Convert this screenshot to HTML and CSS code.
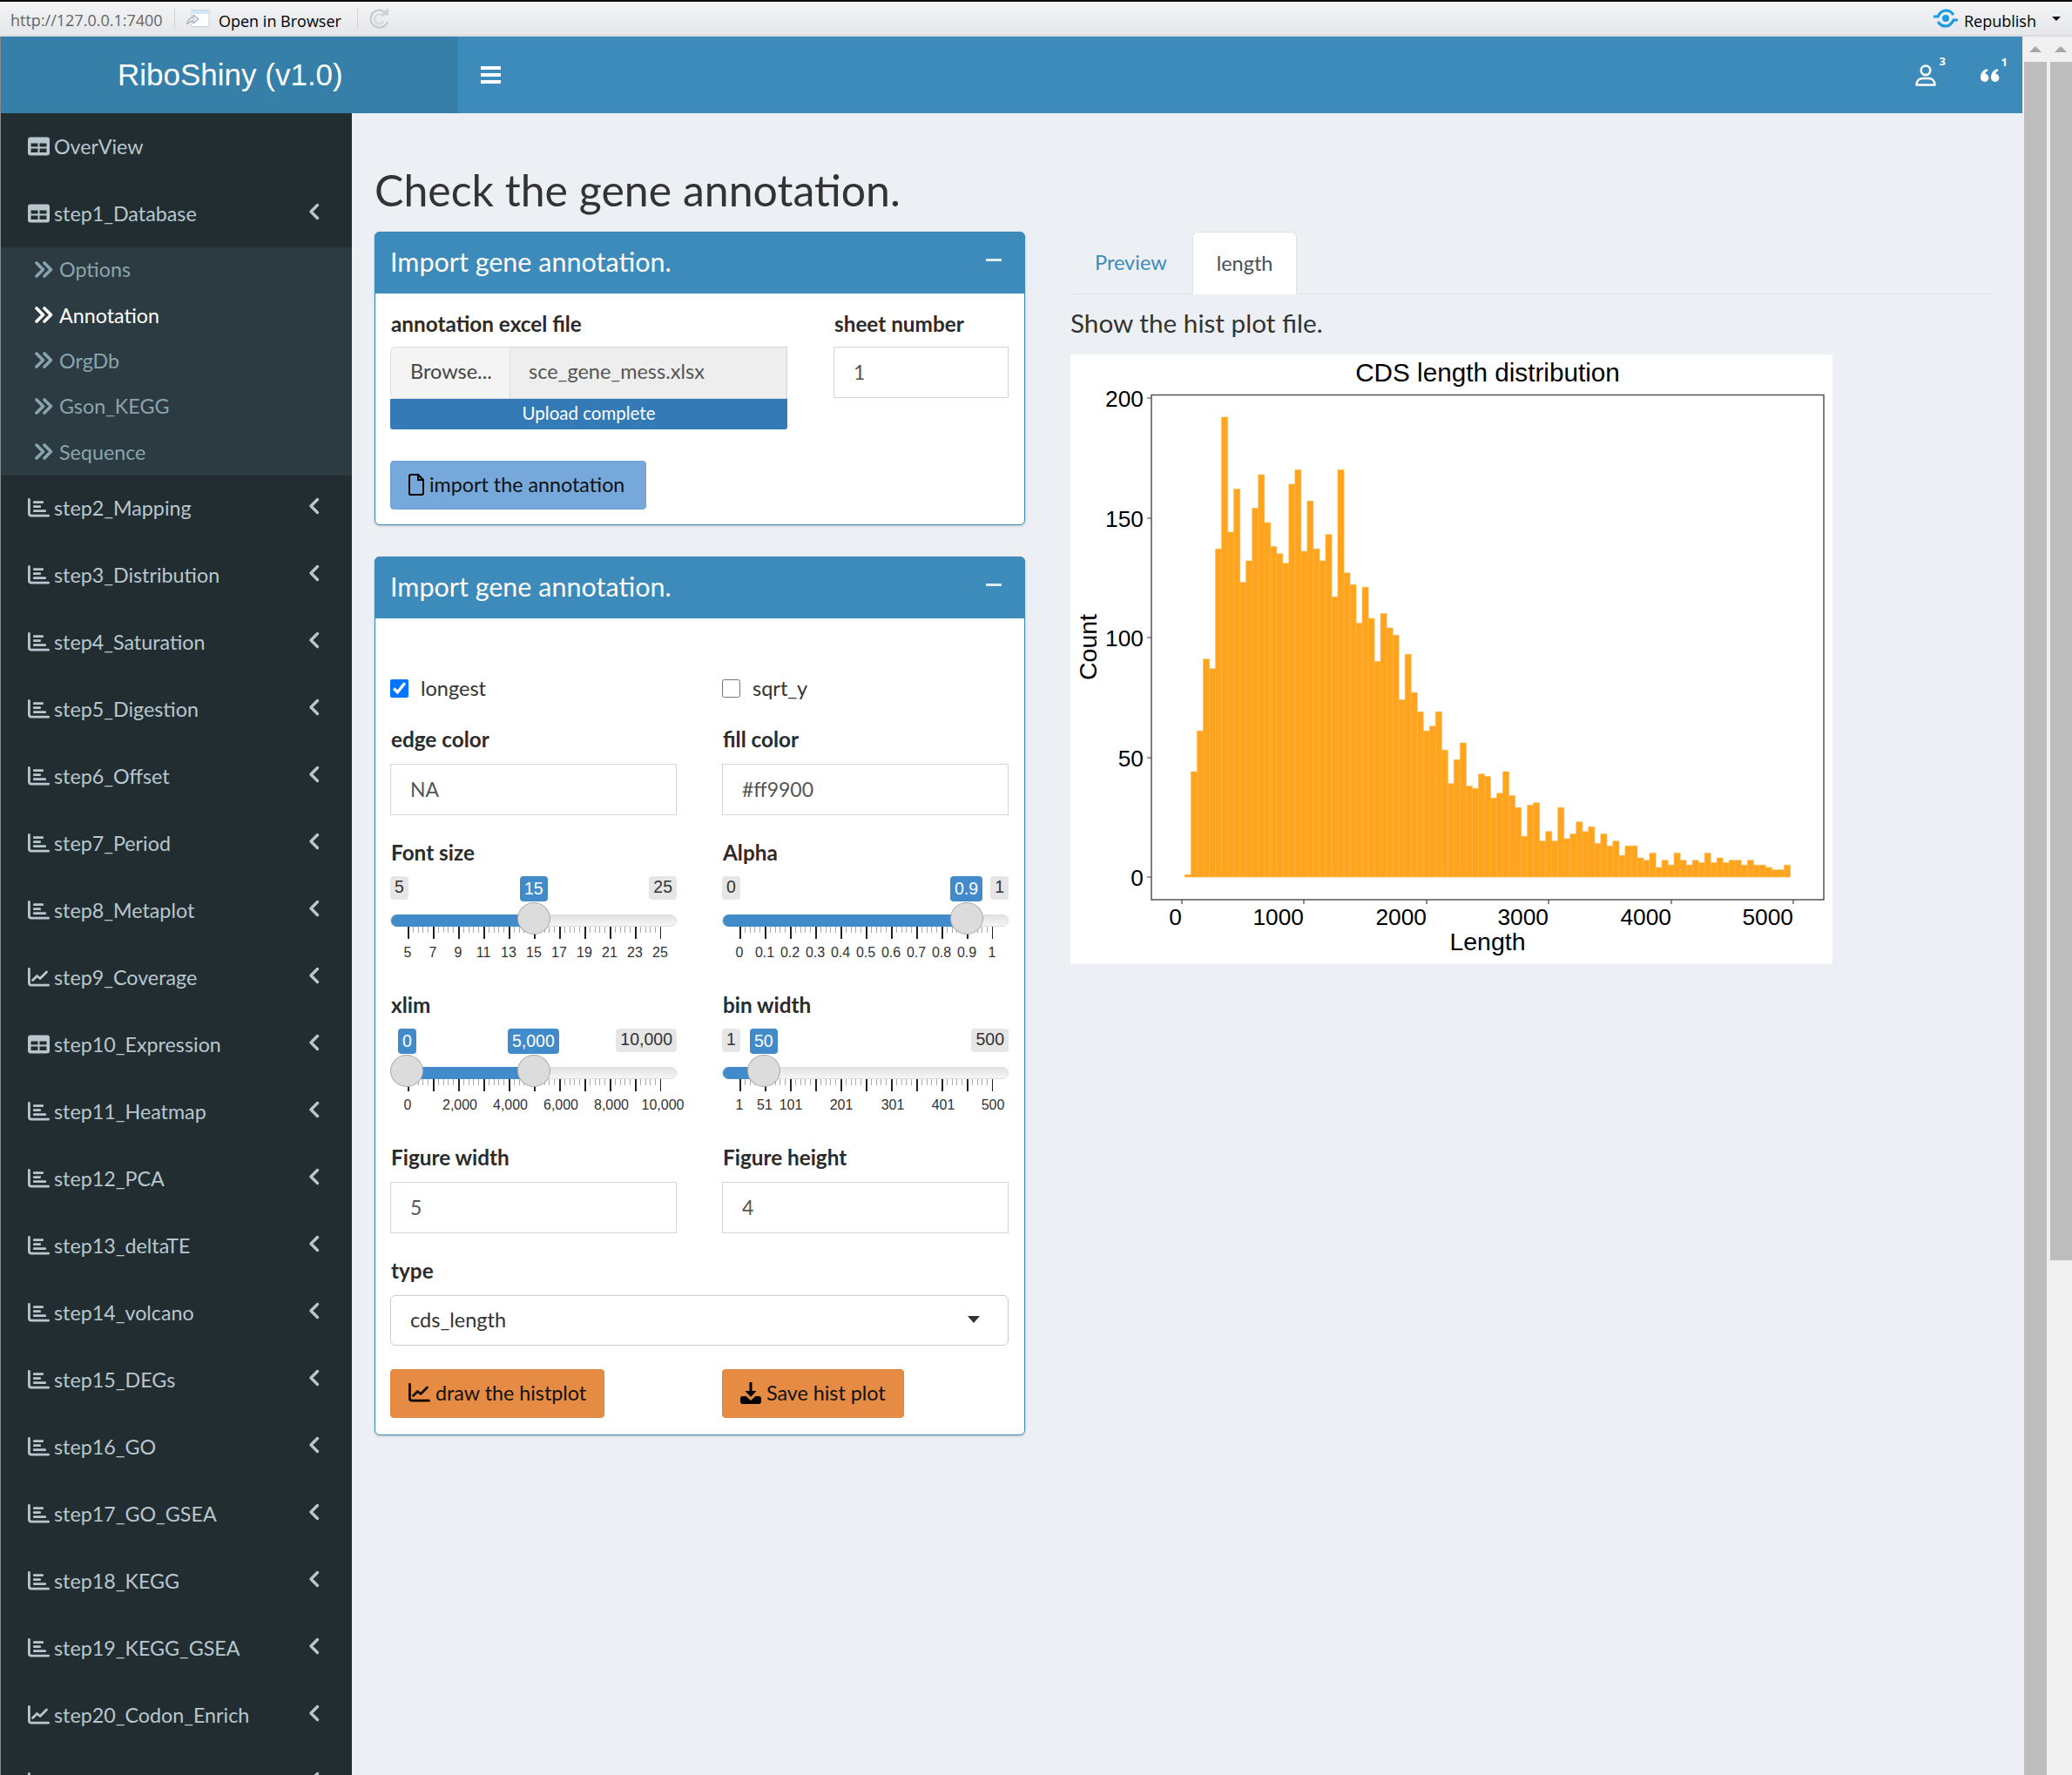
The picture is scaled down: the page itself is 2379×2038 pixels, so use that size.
FILE: index.html
```html
<!DOCTYPE html>
<html lang="en">
<head>
    <meta charset="UTF-8">
    <title>RiboShiny (v1.0)</title>
    <link rel="stylesheet" href="styles.css">
</head>
<body>
    <svg class="icon-defs" width="0" height="0">
        <symbol id="i-table" viewBox="0 0 25 21">
            <path fill-rule="evenodd" d="M3 0h19a3 3 0 0 1 3 3v15a3 3 0 0 1-3 3H3a3 3 0 0 1-3-3V3a3 3 0 0 1 3-3zM3.500 7v4h8v-4zM13.500 7v4h8v-4zM3.500 13v4.500h8V13zM13.500 13v4.500h8V13z"/>
        </symbol>
        <symbol id="i-bars" viewBox="0 0 25 22">
            <path d="M0 1.500a1.400 1.400 0 0 1 2.800 0v16a1.300 1.300 0 0 0 1.300 1.300h19.500a1.400 1.400 0 0 1 0 2.800H4a4 4 0 0 1-4-4z"/>
            <rect x="6" y="3.300" width="12" height="2.800" rx="1"/>
            <rect x="6" y="8.300" width="9" height="2.800" rx="1"/>
            <rect x="6" y="13.300" width="15" height="2.800" rx="1"/>
        </symbol>
        <symbol id="i-line" viewBox="0 0 25 22">
            <path d="M0 1.500a1.400 1.400 0 0 1 2.800 0v16a1.300 1.300 0 0 0 1.300 1.300h19.500a1.400 1.400 0 0 1 0 2.800H4a4 4 0 0 1-4-4z"/>
            <path d="M5.500 14.500l5-5 3.500 3 7.500-7.500" fill="none" stroke="currentColor" stroke-width="2.800" stroke-linecap="round" stroke-linejoin="round"/>
        </symbol>
        <symbol id="i-angles" viewBox="0 0 21 19">
            <path d="M2 2l7.500 7.500L2 17M11 2l7.500 7.500L11 17" fill="none" stroke="currentColor" stroke-width="3.600" stroke-linecap="round" stroke-linejoin="round"/>
        </symbol>
        <symbol id="i-chevron" viewBox="0 0 13 20">
            <path d="M10.500 2.500L3 10l7.500 7.500" fill="none" stroke="currentColor" stroke-width="3.400" stroke-linecap="round" stroke-linejoin="round"/>
        </symbol>
    </svg>

    <div class="viewer-bar">
        <span class="viewer-url">http://127.0.0.1:7400</span>
        <span class="viewer-sep"></span>
        <svg class="viewer-open-icon" viewBox="0 0 27 20" width="27" height="20">
            <rect x="6" y="0.500" width="20" height="19" fill="#fff" stroke="#c9d3de"/>
            <rect x="7" y="1" width="18" height="4" fill="#cfe6f8"/>
            <path d="M1 17c0-5 3-8 7-8V6l6 5-6 5v-3c-3 0-5 1-7 4z" fill="#e4e8ec" stroke="#8d99a5"/>
        </svg>
        <span class="viewer-open">Open in Browser</span>
        <span class="viewer-sep viewer-sep-2"></span>
        <svg class="viewer-reload" viewBox="0 0 25 26" width="25" height="26">
            <path d="M20 7a10 10 0 1 0 2 10" fill="none" stroke="#bfc6cd" stroke-width="2"/>
            <path d="M17 11a5.500 5.500 0 1 0 .5 5" fill="none" stroke="#d3d8dd" stroke-width="2"/>
            <path d="M14 9l9-8v9z" fill="#cbd1d7"/>
        </svg>
        <div class="viewer-publish">
            <svg viewBox="0 0 28 22" width="28" height="22">
                <path d="M1 9h4c2-4 5-7 9-7s6 1 8 4" fill="none" stroke="#1a9be8" stroke-width="3.200" stroke-linecap="round"/>
                <path d="M27 13h-4c-2 4-5 7-9 7s-6-1-8-4" fill="none" stroke="#1a9be8" stroke-width="3.200" stroke-linecap="round"/>
                <circle cx="14" cy="11" r="4" fill="#1a9be8"/>
            </svg>
            <span class="viewer-publish-text">Republish</span>
            <i class="viewer-caret"></i>
        </div>
    </div>

    <div class="viewer-main">
        <div class="app">
            <header class="app-header">
                <div class="logo">RiboShiny (v1.0)</div>
                <nav class="navbar">
                    <button class="burger"><i></i><i></i><i></i></button>
                    <div class="nav-right">
                        <span class="nav-notif">
                            <svg viewBox="0 0 24 25" width="24" height="25">
                                <circle cx="12" cy="6.800" r="5.300" fill="none" stroke="#fff" stroke-width="2.600"/>
                                <path d="M1.500 23.500c0-4.500 3-7.500 7-7.500h7c4 0 7 3 7 7.500z" fill="none" stroke="#fff" stroke-width="2.600" stroke-linejoin="round"/>
                            </svg>
                            <b class="notif-count">3</b>
                        </span>
                        <span class="nav-notif">
                            <svg viewBox="0 0 22 15" width="22" height="15">
                                <path fill="#fff" d="M0 10.200C0 5 2.500 1.500 7.500 0l1 2.200C6.500 3.200 5.400 4.300 5 5.600a4.700 4.700 0 1 1-5 4.600zM12 10.200C12 5 14.500 1.500 19.500 0l1 2.200c-2 1-3.100 2.100-3.500 3.400a4.700 4.700 0 1 1-5 4.600z"/>
                            </svg>
                            <b class="notif-count notif-count-2">1</b>
                        </span>
                    </div>
                </nav>
            </header>

            <div class="app-body">
                <aside class="sidebar">
                    <a class="side-item"><svg class="side-icon"><use href="#i-table"/></svg>OverView</a>
                    <a class="side-item"><svg class="side-icon"><use href="#i-table"/></svg>step1_Database<svg class="side-chevron"><use href="#i-chevron"/></svg></a>
                    <div class="side-sub">
                        <a class="sub-item"><svg class="sub-icon"><use href="#i-angles"/></svg>Options</a>
                        <a class="sub-item active"><svg class="sub-icon"><use href="#i-angles"/></svg>Annotation</a>
                        <a class="sub-item"><svg class="sub-icon"><use href="#i-angles"/></svg>OrgDb</a>
                        <a class="sub-item"><svg class="sub-icon"><use href="#i-angles"/></svg>Gson_KEGG</a>
                        <a class="sub-item"><svg class="sub-icon"><use href="#i-angles"/></svg>Sequence</a>
                    </div>
                    <a class="side-item"><svg class="side-icon"><use href="#i-bars"/></svg>step2_Mapping<svg class="side-chevron"><use href="#i-chevron"/></svg></a>
                    <a class="side-item"><svg class="side-icon"><use href="#i-bars"/></svg>step3_Distribution<svg class="side-chevron"><use href="#i-chevron"/></svg></a>
                    <a class="side-item"><svg class="side-icon"><use href="#i-bars"/></svg>step4_Saturation<svg class="side-chevron"><use href="#i-chevron"/></svg></a>
                    <a class="side-item"><svg class="side-icon"><use href="#i-bars"/></svg>step5_Digestion<svg class="side-chevron"><use href="#i-chevron"/></svg></a>
                    <a class="side-item"><svg class="side-icon"><use href="#i-bars"/></svg>step6_Offset<svg class="side-chevron"><use href="#i-chevron"/></svg></a>
                    <a class="side-item"><svg class="side-icon"><use href="#i-bars"/></svg>step7_Period<svg class="side-chevron"><use href="#i-chevron"/></svg></a>
                    <a class="side-item"><svg class="side-icon"><use href="#i-bars"/></svg>step8_Metaplot<svg class="side-chevron"><use href="#i-chevron"/></svg></a>
                    <a class="side-item"><svg class="side-icon"><use href="#i-line"/></svg>step9_Coverage<svg class="side-chevron"><use href="#i-chevron"/></svg></a>
                    <a class="side-item"><svg class="side-icon"><use href="#i-table"/></svg>step10_Expression<svg class="side-chevron"><use href="#i-chevron"/></svg></a>
                    <a class="side-item"><svg class="side-icon"><use href="#i-bars"/></svg>step11_Heatmap<svg class="side-chevron"><use href="#i-chevron"/></svg></a>
                    <a class="side-item"><svg class="side-icon"><use href="#i-bars"/></svg>step12_PCA<svg class="side-chevron"><use href="#i-chevron"/></svg></a>
                    <a class="side-item"><svg class="side-icon"><use href="#i-bars"/></svg>step13_deltaTE<svg class="side-chevron"><use href="#i-chevron"/></svg></a>
                    <a class="side-item"><svg class="side-icon"><use href="#i-bars"/></svg>step14_volcano<svg class="side-chevron"><use href="#i-chevron"/></svg></a>
                    <a class="side-item"><svg class="side-icon"><use href="#i-bars"/></svg>step15_DEGs<svg class="side-chevron"><use href="#i-chevron"/></svg></a>
                    <a class="side-item"><svg class="side-icon"><use href="#i-bars"/></svg>step16_GO<svg class="side-chevron"><use href="#i-chevron"/></svg></a>
                    <a class="side-item"><svg class="side-icon"><use href="#i-bars"/></svg>step17_GO_GSEA<svg class="side-chevron"><use href="#i-chevron"/></svg></a>
                    <a class="side-item"><svg class="side-icon"><use href="#i-bars"/></svg>step18_KEGG<svg class="side-chevron"><use href="#i-chevron"/></svg></a>
                    <a class="side-item"><svg class="side-icon"><use href="#i-bars"/></svg>step19_KEGG_GSEA<svg class="side-chevron"><use href="#i-chevron"/></svg></a>
                    <a class="side-item"><svg class="side-icon"><use href="#i-line"/></svg>step20_Codon_Enrich<svg class="side-chevron"><use href="#i-chevron"/></svg></a>
                    <a class="side-item"><svg class="side-icon"><use href="#i-bars"/></svg><svg class="side-chevron"><use href="#i-chevron"/></svg></a>
                </aside>

                <main class="content">
                    <h1 class="page-title">Check the gene annotation.</h1>
                    <div class="columns">
                        <div class="col-left">
                            <section class="box">
                                <div class="box-head"><span>Import gene annotation.</span><i class="box-minus"></i></div>
                                <div class="box-body box-body-upload">
                                    <div class="upload-row">
                                        <div class="upload-file">
                                            <label class="field-label">annotation excel file</label>
                                            <div class="file-input">
                                                <span class="file-browse">Browse...</span>
                                                <span class="file-name">sce_gene_mess.xlsx</span>
                                            </div>
                                            <div class="file-progress">Upload complete</div>
                                        </div>
                                        <div class="upload-sheet">
                                            <label class="field-label">sheet number</label>
                                            <input class="text-input" value="1">
                                        </div>
                                    </div>
                                    <button class="btn btn-blue">
                                        <svg viewBox="0 0 18 25" width="18" height="25"><path d="M2.500 1h8.500l6 6v15a2 2 0 0 1-2 2H2.500a1.500 1.500 0 0 1-1.500-1.500v-20A1.500 1.500 0 0 1 2.500 1zM11 1v6h6" fill="none" stroke="#000" stroke-width="2"/></svg>
                                        import the annotation
                                    </button>
                                </div>
                            </section>

                            <section class="box">
                                <div class="box-head"><span>Import gene annotation.</span><i class="box-minus"></i></div>
                                <div class="box-body box-body-form">
                                    <label class="check-row"><input type="checkbox" checked> longest</label>
                                    <label class="check-row"><input type="checkbox"> sqrt_y</label>

                                    <div class="field">
                                        <label class="field-label">edge color</label>
                                        <input class="text-input" value="NA">
                                    </div>
                                    <div class="field">
                                        <label class="field-label">fill color</label>
                                        <input class="text-input" value="#ff9900">
                                    </div>

                                    <div class="slider-field">
                                        <label class="field-label">Font size</label>
                                        <div class="slider">
                                            <span class="tip" style="left:0">5</span>
                                            <span class="tip tip-val" style="left:149px">15</span>
                                            <span class="tip" style="right:0">25</span>
                                            <div class="track"><div class="track-bar" style="left:0;width:165px"></div></div>
                                            <div class="ticks"></div>
                                            <i class="handle" style="left:165px"></i>
                                            <span class="tick-label" style="left:20px">5</span>
                                            <span class="tick-label" style="left:49px">7</span>
                                            <span class="tick-label" style="left:78px">9</span>
                                            <span class="tick-label" style="left:107px">11</span>
                                            <span class="tick-label" style="left:136px">13</span>
                                            <span class="tick-label" style="left:165px">15</span>
                                            <span class="tick-label" style="left:194px">17</span>
                                            <span class="tick-label" style="left:223px">19</span>
                                            <span class="tick-label" style="left:252px">21</span>
                                            <span class="tick-label" style="left:281px">23</span>
                                            <span class="tick-label" style="left:310px">25</span>
                                        </div>
                                    </div>
                                    <div class="slider-field">
                                        <label class="field-label">Alpha</label>
                                        <div class="slider">
                                            <span class="tip" style="left:0">0</span>
                                            <span class="tip tip-val" style="left:262px">0.9</span>
                                            <span class="tip" style="right:0">1</span>
                                            <div class="track"><div class="track-bar" style="left:0;width:281px"></div></div>
                                            <div class="ticks"></div>
                                            <i class="handle" style="left:281px"></i>
                                            <span class="tick-label" style="left:20px">0</span>
                                            <span class="tick-label" style="left:49px">0.1</span>
                                            <span class="tick-label" style="left:78px">0.2</span>
                                            <span class="tick-label" style="left:107px">0.3</span>
                                            <span class="tick-label" style="left:136px">0.4</span>
                                            <span class="tick-label" style="left:165px">0.5</span>
                                            <span class="tick-label" style="left:194px">0.6</span>
                                            <span class="tick-label" style="left:223px">0.7</span>
                                            <span class="tick-label" style="left:252px">0.8</span>
                                            <span class="tick-label" style="left:281px">0.9</span>
                                            <span class="tick-label" style="left:310px">1</span>
                                        </div>
                                    </div>
                                    <div class="slider-field">
                                        <label class="field-label">xlim</label>
                                        <div class="slider">
                                            <span class="tip tip-val" style="left:9px">0</span>
                                            <span class="tip tip-val" style="left:135px">5,000</span>
                                            <span class="tip" style="right:0">10,000</span>
                                            <div class="track"><div class="track-bar" style="left:19px;width:146px"></div></div>
                                            <div class="ticks"></div>
                                            <i class="handle" style="left:19px"></i>
                                            <i class="handle" style="left:165px"></i>
                                            <span class="tick-label" style="left:20px">0</span>
                                            <span class="tick-label" style="left:80px">2,000</span>
                                            <span class="tick-label" style="left:138px">4,000</span>
                                            <span class="tick-label" style="left:196px">6,000</span>
                                            <span class="tick-label" style="left:254px">8,000</span>
                                            <span class="tick-label" style="left:313px">10,000</span>
                                        </div>
                                    </div>
                                    <div class="slider-field">
                                        <label class="field-label">bin width</label>
                                        <div class="slider">
                                            <span class="tip" style="left:0">1</span>
                                            <span class="tip tip-val" style="left:32px">50</span>
                                            <span class="tip" style="right:0">500</span>
                                            <div class="track"><div class="track-bar" style="left:0;width:48px"></div></div>
                                            <div class="ticks"></div>
                                            <i class="handle" style="left:48px"></i>
                                            <span class="tick-label" style="left:20px">1</span>
                                            <span class="tick-label" style="left:49px">51</span>
                                            <span class="tick-label" style="left:79px">101</span>
                                            <span class="tick-label" style="left:137px">201</span>
                                            <span class="tick-label" style="left:196px">301</span>
                                            <span class="tick-label" style="left:254px">401</span>
                                            <span class="tick-label" style="left:311px">500</span>
                                        </div>
                                    </div>

                                    <div class="field">
                                        <label class="field-label">Figure width</label>
                                        <input class="text-input" value="5">
                                    </div>
                                    <div class="field">
                                        <label class="field-label">Figure height</label>
                                        <input class="text-input" value="4">
                                    </div>

                                    <div class="field field-wide">
                                        <label class="field-label">type</label>
                                        <div class="select-box">cds_length<i class="select-caret"></i></div>
                                    </div>

                                    <div class="btn-cell">
                                        <button class="btn btn-orange">
                                            <svg viewBox="0 0 25 22" width="25" height="22"><use href="#i-line"/></svg>
                                            draw the histplot
                                        </button>
                                    </div>
                                    <div class="btn-cell">
                                        <button class="btn btn-orange">
                                            <svg viewBox="0 0 24 25" width="24" height="25"><path d="M10.500 0h3v10h5l-6.500 7-6.500-7h5z"/><path fill-rule="evenodd" d="M3 16h3.500l5.500 5 5.500-5H21a3 3 0 0 1 3 3v3a3 3 0 0 1-3 3H3a3 3 0 0 1-3-3v-3a3 3 0 0 1 3-3z"/></svg>
                                            Save hist plot
                                        </button>
                                    </div>
                                </div>
                            </section>
                        </div>

                        <div class="col-right">
                            <div class="tabs">
                                <a class="tab">Preview</a>
                                <a class="tab tab-active">length</a>
                            </div>
                            <h4 class="plot-heading">Show the hist plot file.</h4>
                            <div class="plot">
                                <svg viewBox="0 0 875 700" width="875" height="700">
                                    <path class="hist" transform="translate(131.500 600) scale(7.020 -2.750)" d="M0 0v1h1v-1zm1 0v44h1v-44zm1 0v61h1v-61zm1 0v91h1v-91zm1 0v87h1v-87zm1 0v137h1v-137zm1 0v192h1v-192zm1 0v144h1v-144zm1 0v162h1v-162zm1 0v123h1v-123zm1 0v132h1v-132zm1 0v154h1v-154zm1 0v168h1v-168zm1 0v148h1v-148zm1 0v138h1v-138zm1 0v135h1v-135zm1 0v131h1v-131zm1 0v164h1v-164zm1 0v170h1v-170zm1 0v136h1v-136zm1 0v157h1v-157zm1 0v137h1v-137zm1 0v132h1v-132zm1 0v143h1v-143zm1 0v117h1v-117zm1 0v170h1v-170zm1 0v127h1v-127zm1 0v122h1v-122zm1 0v106h1v-106zm1 0v121h1v-121zm1 0v108h1v-108zm1 0v90h1v-90zm1 0v110h1v-110zm1 0v104h1v-104zm1 0v101h1v-101zm1 0v74h1v-74zm1 0v93h1v-93zm1 0v77h1v-77zm1 0v69h1v-69zm1 0v61h1v-61zm1 0v63h1v-63zm1 0v69h1v-69zm1 0v53h1v-53zm1 0v39h1v-39zm1 0v49h1v-49zm1 0v56h1v-56zm1 0v38h1v-38zm1 0v37h1v-37zm1 0v43h1v-43zm1 0v42h1v-42zm1 0v33h1v-33zm1 0v35h1v-35zm1 0v44h1v-44zm1 0v34h1v-34zm1 0v29h1v-29zm1 0v17h1v-17zm1 0v30h1v-30zm1 0v31h1v-31zm1 0v15h1v-15zm1 0v19h1v-19zm1 0v15h1v-15zm1 0v29h1v-29zm1 0v16h1v-16zm1 0v18h1v-18zm1 0v23h1v-23zm1 0v19h1v-19zm1 0v21h1v-21zm1 0v14h1v-14zm1 0v18h1v-18zm1 0v13h1v-13zm1 0v15h1v-15zm1 0v9h1v-9zm1 0v13h1v-13zm1 0v13h1v-13zm1 0v8h1v-8zm1 0v7h1v-7zm1 0v10h1v-10zm1 0v4h1v-4zm1 0v7h1v-7zm1 0v5h1v-5zm1 0v10h1v-10zm1 0v7h1v-7zm1 0v5h1v-5zm1 0v7h1v-7zm1 0v6h1v-6zm1 0v10h1v-10zm1 0v6h1v-6zm1 0v8h1v-8zm1 0v6h1v-6zm1 0v7h1v-7zm1 0v7h1v-7zm1 0v5h1v-5zm1 0v7h1v-7zm1 0v5h1v-5zm1 0v5h1v-5zm1 0v4h1v-4zm1 0v3h1v-3zm1 0v3h1v-3zm1 0v5h1v-5z"/>
                                    <rect class="panel" x="93" y="46.500" width="772" height="579.500"/>
                                    <path class="axis-tick" d="M88 50h5M88 188h5M88 325h5M88 463h5M88 600h5M128 626v5M268 626v5M409 626v5M549 626v5M690 626v5M830 626v5"/>
                                    <text class="plot-title" x="479" y="31" text-anchor="middle">CDS length distribution</text>
                                    <g class="plot-ticks" text-anchor="end">
                                        <text x="84" y="60">200</text>
                                        <text x="84" y="198">150</text>
                                        <text x="84" y="335">100</text>
                                        <text x="84" y="473">50</text>
                                        <text x="84" y="610">0</text>
                                        <text x="128" y="655">0</text>
                                        <text x="268" y="655">1000</text>
                                        <text x="409" y="655">2000</text>
                                        <text x="549" y="655">3000</text>
                                        <text x="690" y="655">4000</text>
                                        <text x="830" y="655">5000</text>
                                    </g>
                                    <text class="plot-axis" x="479" y="684" text-anchor="middle">Length</text>
                                    <text class="plot-axis" transform="translate(30 336) rotate(-90)" text-anchor="middle">Count</text>
                                </svg>
                            </div>
                        </div>
                    </div>
                </main>
            </div>
        </div>

        <div class="scrollbars">
            <div class="scroll-col"><i class="scroll-arrow"></i><div class="scroll-thumb"></div></div>
            <div class="scroll-col"><i class="scroll-arrow"></i><div class="scroll-thumb scroll-thumb-short"></div></div>
        </div>
    </div>
</body>
</html>
```

FILE: styles.css
```css
* {
    box-sizing: border-box;
}

html, body {
    height: 2038px;
    margin: 0;
    overflow: hidden;
}

body {
    display: flex;
    flex-direction: column;
    font-family: Lato, "Open Sans", sans-serif;
    font-size: 24px;
    color: #333;
    background: #ecf0f5;
}

.icon-defs {
    position: absolute;
}

/* rstudio viewer toolbar */
.viewer-bar {
    display: flex;
    align-items: center;
    height: 42px;
    flex: none;
    padding: 2px 0 2px 12px;
    border-top: 2px solid #0a0a0a;
    border-bottom: 2px solid #d8dadd;
    background: linear-gradient(#f4f4f5, #e5e7ea);
    font-family: "Open Sans", sans-serif;
    font-size: 18px;
    color: #000;
}

.viewer-url {
    width: 188px;
    padding-top: 4px;
    color: #666;
    white-space: nowrap;
}

.viewer-sep {
    width: 1px;
    height: 24px;
    background: #cfd2d6;
}

.viewer-open-icon {
    margin-left: 13px;
}

.viewer-open {
    margin-left: 10px;
    width: 159px;
    padding-top: 5px;
    white-space: nowrap;
}

.viewer-reload {
    margin-left: 12px;
}

.viewer-publish {
    display: flex;
    align-items: center;
    margin-left: auto;
    padding-right: 13px;
    gap: 7px;
}

.viewer-publish-text {
    padding-top: 5px;
}

.viewer-caret {
    margin-left: 11px;
    border: 5px solid transparent;
    border-top-color: #111;
    border-bottom: 0;
}

.viewer-main {
    display: flex;
    flex: 1;
    min-height: 0;
}

.app {
    width: 2322px;
    flex: none;
    display: flex;
    flex-direction: column;
    border-left: 1px solid #888;
}

/* header */
.app-header {
    display: flex;
    height: 88px;
    flex: none;
}

.logo {
    width: 525px;
    background: #367fa9;
    color: #fff;
    font-family: "Liberation Sans", sans-serif;
    font-size: 35px;
    line-height: 88px;
    padding-left: 134px;
}

.navbar {
    flex: 1;
    display: flex;
    align-items: center;
    background: #3c8bbb;
}

.burger {
    display: flex;
    flex-direction: column;
    gap: 4.500px;
    width: 23px;
    margin-left: 26px;
    padding: 0;
    border: 0;
    background: none;
}

.burger i {
    display: block;
    height: 3.500px;
    background: #fff;
}

.nav-right {
    display: flex;
    align-items: center;
    gap: 51px;
    margin-left: auto;
    padding-right: 26px;
}

.nav-notif {
    position: relative;
    display: flex;
}

.notif-count {
    position: absolute;
    top: -13px;
    right: -11px;
    font-size: 13px;
    color: #fff;
    font-family: "Open Sans", sans-serif;
}

.notif-count-2 {
    top: -17px;
    right: -9px;
}

/* sidebar */
.app-body {
    flex: 1;
    display: flex;
    min-height: 0;
}

.sidebar {
    width: 403px;
    flex: none;
    background: #222d32;
    color: #b8c7ce;
    overflow: hidden;
}

.side-item {
    display: flex;
    align-items: center;
    height: 77px;
    padding: 0 37px 2px 31px;
    font-size: 23.300px;
}

.side-icon {
    width: 25px;
    height: 22px;
    margin-right: 5px;
    fill: currentColor;
}

.side-chevron {
    width: 13px;
    height: 20px;
    margin-left: auto;
    margin-top: -4px;
}

.side-sub {
    background: #2c3b41;
    color: #8aa4af;
}

.sub-item {
    display: flex;
    align-items: center;
    height: 52.400px;
    padding: 0 0 2px 39px;
    font-size: 23.300px;
}

.sub-item.active {
    color: #fff;
}

.sub-icon {
    width: 21px;
    height: 19px;
    margin-right: 7px;
}

/* main content */
.content {
    flex: 1;
    padding: 58px 31px 0 26px;
    min-width: 0;
}

.page-title {
    margin: 0 0 18px;
    font-size: 50px;
    line-height: 60px;
    font-weight: 400;
}

.columns {
    display: grid;
    grid-template-columns: 747px 1062px;
    column-gap: 52px;
}

.box {
    margin-bottom: 36px;
    background: #fff;
    border: 1px solid #3c8bbb;
    border-radius: 6px;
    box-shadow: 0 1px 3px rgba(0, 0, 0, .2);
}

.box-head {
    display: flex;
    align-items: center;
    justify-content: space-between;
    height: 71px;
    padding: 0 27px 4px 18px;
    margin: -1px -1px 0;
    background: #3c8bbb;
    border-radius: 6px 6px 0 0;
    color: #fff;
    font-size: 30.500px;
}

.box-minus {
    width: 18px;
    height: 3px;
    margin-top: -2px;
    background: #dfeaf2;
}

.box-body {
    padding: 21px 18px 17px 17px;
}

.field-label {
    display: block;
    height: 30px;
    margin-bottom: 12px;
    padding-left: 1px;
    font-size: 24.300px;
    line-height: 27px;
    font-weight: 700;
    color: #2b2b2b;
}

.text-input {
    display: block;
    width: 100%;
    height: 59px;
    padding: 0 22px 2px;
    border: 1px solid #d2d6de;
    background: #fff;
    color: #555;
    font-family: inherit;
    font-size: 23px;
}

.upload-row {
    display: grid;
    grid-template-columns: 456px 201px;
    column-gap: 53px;
}

.upload-row .field-label {
    margin-bottom: 10px;
}

.file-input {
    display: flex;
    height: 60px;
    font-size: 23.500px;
    line-height: 55px;
}

.file-browse {
    width: 138px;
    padding-left: 22px;
    background: #f4f4f4;
    border: 1px solid #ddd;
    border-radius: 6px 0 0 6px;
    color: #444;
}

.file-name {
    flex: 1;
    padding-left: 21px;
    background: #eee;
    border: 1px solid #d2d6de;
    border-left: 0;
    color: #555;
}

.file-progress {
    height: 35px;
    background: #337ab7;
    border-radius: 0 0 3px 3px;
    color: #fff;
    font-size: 20.500px;
    line-height: 33px;
    text-align: center;
}

.btn {
    display: inline-flex;
    align-items: center;
    gap: 6px;
    height: 56px;
    padding: 0 20px 2px;
    border: 1px solid transparent;
    border-radius: 4px;
    font-family: inherit;
    font-size: 23.300px;
    color: #111;
    white-space: nowrap;
}

.btn-blue {
    margin-top: 36px;
    width: 294px;
    background: #76a8dc;
    border-color: #6f9fd2;
}

.btn-orange {
    background: #e68b43;
    border-color: #e2843c;
}

.box-body-form {
    display: grid;
    grid-template-columns: 329px 329px;
    column-gap: 52px;
    padding-top: 65px;
    padding-bottom: 19px;
}

.check-row {
    display: flex;
    align-items: center;
    height: 30px;
    margin-bottom: 30px;
    font-size: 23.500px;
    gap: 14px;
}

.check-row input {
    width: 21px;
    height: 21px;
    margin: 0;
}

.field {
    margin-bottom: 29px;
}

.field-wide {
    grid-column: 1 / 3;
    margin-bottom: 27px;
}

.select-box {
    display: flex;
    align-items: center;
    justify-content: space-between;
    height: 58px;
    padding: 0 32px 2px 22px;
    border: 1px solid #ccc;
    border-radius: 6px;
    font-size: 23.500px;
}

.select-caret {
    border: 7.500px solid transparent;
    border-top: 8px solid #333;
    border-bottom: 0;
}

/* range sliders */
.slider-field .field-label {
    margin-bottom: 0;
}

.slider {
    position: relative;
    height: 145px;
    padding-top: 55px;
    font-family: "Liberation Sans", sans-serif;
}

.tip {
    position: absolute;
    top: 11px;
    padding: 0 5px;
    height: 27px;
    background: #e6e6e6;
    border-radius: 4px;
    font-size: 19.500px;
    line-height: 25px;
    color: #333;
}

.tip-val {
    height: 29px;
    line-height: 29px;
    background: #428bca;
    color: #fff;
}

.track {
    position: relative;
    height: 14px;
    border: 1px solid #ddd;
    border-radius: 7px;
    background: linear-gradient(#e2e2e2, #f6f6f6);
}

.track-bar {
    position: absolute;
    top: -1px;
    bottom: -1px;
    background: #428bca;
    border-radius: 7px 0 0 7px;
}

.ticks {
    height: 14px;
    margin: 0 18px 0 20px;
    background:
        repeating-linear-gradient(90deg, #222 0 2px, transparent 2px 29px) 0 0 / 100% 14px no-repeat,
        repeating-linear-gradient(90deg, #aaa 0 1px, transparent 1px 5.800px) 0 0 / 100% 7px no-repeat;
}

.handle {
    position: absolute;
    top: 41px;
    width: 38px;
    height: 37px;
    margin-left: -19px;
    border: 1px solid #aaa;
    border-radius: 50%;
    background: #dcdcdc;
}

.tick-label {
    position: absolute;
    top: 90px;
    font-size: 16px;
    line-height: 18px;
    color: #333;
    transform: translateX(-50%);
}

/* right column */
.tabs {
    display: flex;
    height: 72px;
    border-bottom: 1px solid #dee2e6;
    font-size: 23.500px;
}

.tab {
    height: 72px;
    padding: 0 28px;
    line-height: 70px;
    color: #3c8bbb;
}

.tab-active {
    margin-left: 1px;
    padding: 0 27px;
    background: #fff;
    border: 1px solid #dee2e6;
    border-bottom-color: #fff;
    border-radius: 6px 6px 0 0;
    color: #495057;
}

.plot-heading {
    margin: 13px 0 16px;
    font-size: 29.700px;
    line-height: 40px;
    font-weight: 400;
}

.plot {
    width: 875px;
    height: 700px;
    background: #fff;
}

.plot svg {
    display: block;
}

.hist {
    fill: #ffa41c;
    stroke: #ffb54a;
    stroke-width: .6px;
    vector-effect: non-scaling-stroke;
}

.panel {
    fill: none;
    stroke: #555;
    stroke-width: 1.500px;
}

.axis-tick {
    stroke: #444;
    stroke-width: 1.200px;
}

.plot svg text {
    font-family: "Liberation Sans", sans-serif;
    fill: #000;
}

.plot-title {
    font-size: 29.700px;
}

.plot-ticks {
    font-size: 26.300px;
}

.plot-axis {
    font-size: 28.500px;
}

/* window scrollbars */
.scrollbars {
    flex: 1;
    display: flex;
    justify-content: space-between;
    padding-left: 2px;
    gap: 4px;
    background: #f0f0f0;
}

.scroll-col {
    flex: 1;
    display: flex;
    flex-direction: column;
    align-items: center;
    padding-top: 11px;
}

.scroll-arrow {
    flex: none;
    margin-bottom: 11px;
    border: 7px solid transparent;
    border-bottom: 7px solid #a6a6a6;
    border-top: 0;
}

.scroll-thumb {
    width: 100%;
    flex: 1;
    background: #bdbdbd;
}

.scroll-thumb-short {
    flex: none;
    height: 1376px;
}
```
